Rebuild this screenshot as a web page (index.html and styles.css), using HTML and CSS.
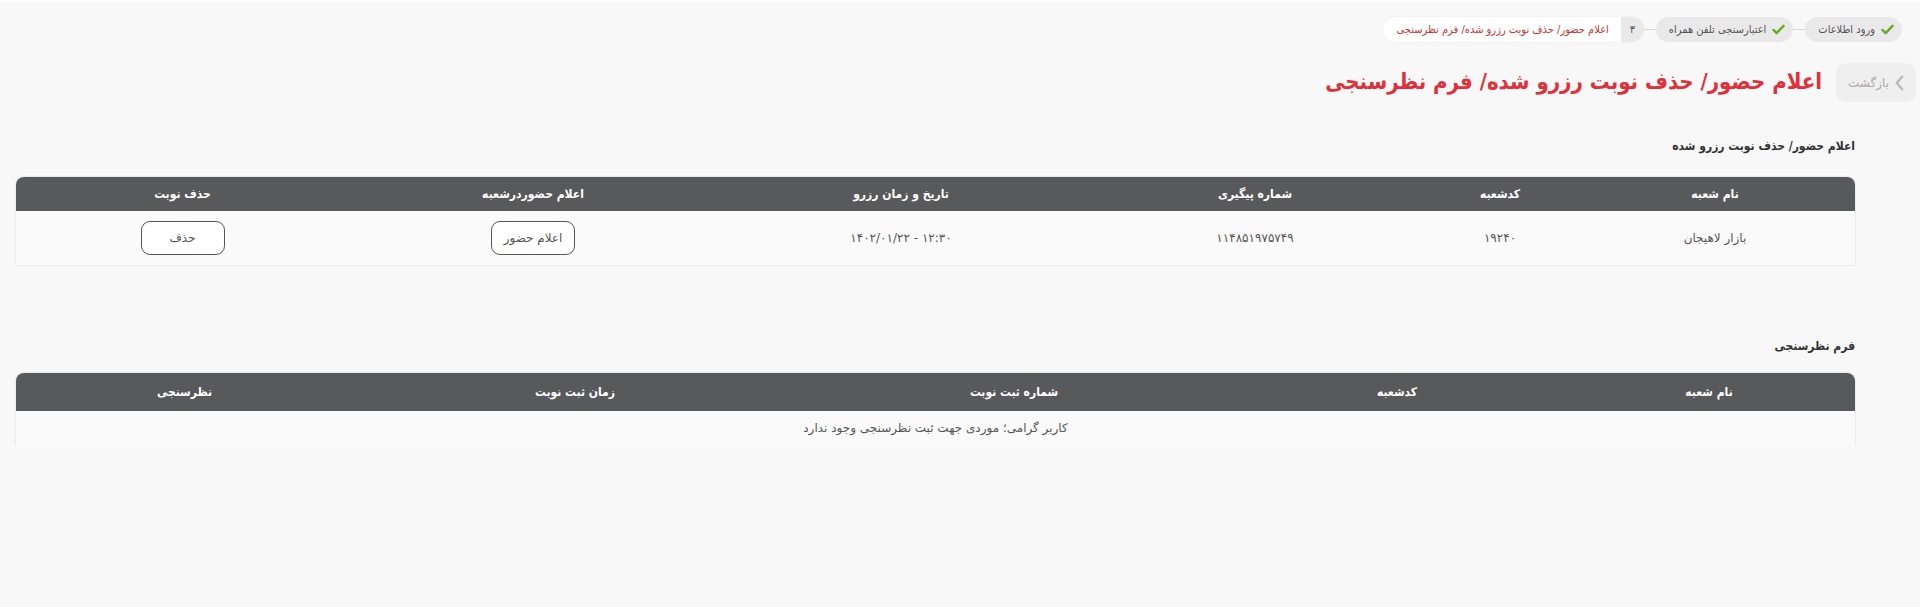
FILE: index.html
```html
<!DOCTYPE html>
<html lang="fa" dir="rtl">
<head>
  <meta charset="UTF-8">
  <meta name="viewport" content="width=device-width, initial-scale=1.0">
  <title>اعلام حضور/ حذف نوبت رزرو شده/ فرم نظرسنجی</title>
  <link rel="stylesheet" href="styles.css">
</head>
<body>
  <div class="page">
    <!-- مراحل -->
    <div class="steps">
      <div class="step done">
        <svg class="check" viewBox="0 0 14 12" width="13" height="11"><path d="M1.5 6.5 L5 10 L12.5 2" fill="none" stroke="#6aab24" stroke-width="2.6" stroke-linecap="round" stroke-linejoin="round"/></svg>
        <span>ورود اطلاعات</span>
      </div>
      <span class="link"></span>
      <div class="step done">
        <svg class="check" viewBox="0 0 14 12" width="13" height="11"><path d="M1.5 6.5 L5 10 L12.5 2" fill="none" stroke="#6aab24" stroke-width="2.6" stroke-linecap="round" stroke-linejoin="round"/></svg>
        <span>اعتبارسنجی تلفن همراه</span>
      </div>
      <span class="link"></span>
      <div class="step current">
        <span class="num">۳</span>
        <span class="label">اعلام حضور/ حذف نوبت رزرو شده/ فرم نظرسنجی</span>
      </div>
    </div>

    <!-- عنوان صفحه -->
    <div class="title-row">
      <button class="back">
        <svg viewBox="0 0 10 18" width="10" height="18"><path d="M8 2 L2 9 L8 16" fill="none" stroke="#b9b9b9" stroke-width="2.6" stroke-linecap="round" stroke-linejoin="round"/></svg>
        <span>بازگشت</span>
      </button>
      <h1>اعلام حضور/ حذف نوبت رزرو شده/ فرم نظرسنجی</h1>
    </div>

    <div class="content">
      <h3 class="section-title">اعلام حضور/ حذف نوبت رزرو شده</h3>
      <table class="grid reserve">
        <thead>
          <tr>
            <th class="c1">نام شعبه</th>
            <th class="c2">کدشعبه</th>
            <th class="c3">شماره پیگیری</th>
            <th class="c4">تاریخ و زمان رزرو</th>
            <th class="c5">اعلام حضوردرشعبه</th>
            <th>حذف نوبت</th>
          </tr>
        </thead>
        <tbody>
          <tr>
            <td>بازار لاهیجان</td>
            <td>۱۹۲۴۰</td>
            <td>۱۱۴۸۵۱۹۷۵۷۴۹</td>
            <td><span dir="ltr">۱۴۰۲/۰۱/۲۲ - ۱۲:۳۰</span></td>
            <td><button class="outline">اعلام حضور</button></td>
            <td><button class="outline">حذف</button></td>
          </tr>
        </tbody>
      </table>

      <h3 class="section-title survey-title">فرم نظرسنجی</h3>
      <table class="grid survey">
        <thead>
          <tr>
            <th class="c1">نام شعبه</th>
            <th class="c2">کدشعبه</th>
            <th class="c3">شماره ثبت نوبت</th>
            <th class="c4">زمان ثبت نوبت</th>
            <th>نظرسنجی</th>
          </tr>
        </thead>
        <tbody>
          <tr>
            <td colspan="5" class="empty">کاربر گرامی؛ موردی جهت ثبت نظرسنجی وجود ندارد</td>
          </tr>
        </tbody>
      </table>
    </div>
  </div>
</body>
</html>
```

FILE: styles.css
```css
body {
  margin: 0;
  background-color: #f8f8f8;
  font-family: "DejaVu Sans", "Noto Sans", sans-serif;
  color: #444;
  border-top: 2px solid #fff;
}

.page {
  padding-top: 15px;
}

/* مراحل */
.steps {
  display: flex;
  align-items: center;
  padding-right: 18px;
}

.step {
  display: flex;
  align-items: center;
  height: 25px;
  border-radius: 13px;
  background-color: #e9e9e9;
  font-family: "DejaVu Sans Condensed", "DejaVu Sans", sans-serif;
  font-size: 11px;
  color: #555;
}

.step.done {
  padding: 0 8px 0 13px;
  gap: 6px;
}

.link {
  width: 12px;
  height: 1px;
  background-color: #d8d8d8;
}

.step.current {
  background-color: #fff;
  box-shadow: 0 0 2px rgba(0, 0, 0, 0.08);
  overflow: hidden;
}

.step.current .num {
  display: flex;
  align-items: center;
  justify-content: center;
  width: 23px;
  height: 100%;
  background-color: #e9e9e9;
  color: #555;
}

.step.current .label {
  padding: 0 12px 0 14px;
  color: #c6343b;
}

/* عنوان */
.title-row {
  display: flex;
  align-items: center;
  gap: 14px;
  margin-top: 21px;
  padding-right: 4px;
}

.back {
  display: flex;
  align-items: center;
  gap: 6px;
  height: 39px;
  width: 80px;
  padding: 0 12px;
  border: none;
  border-radius: 10px;
  background-color: #efefef;
  color: #aaa;
  font-family: inherit;
  font-size: 12px;
}

.title-row h1 {
  margin: 0 0 3px;
  color: #e0313b;
  font-family: "DejaVu Sans Condensed", "DejaVu Sans", sans-serif;
  font-size: 22px;
  font-weight: bold;
}

/* جدول ها */
.content {
  padding: 0 65px 0 16px;
}

.section-title {
  margin: 37px 0 24px;
  font-family: "DejaVu Sans Condensed", "DejaVu Sans", sans-serif;
  font-size: 12px;
  font-weight: bold;
  color: #333;
}

.survey-title {
  margin-top: 74px;
  margin-bottom: 20px;
}

.grid {
  width: 100%;
  border-collapse: separate;
  border-spacing: 0;
  table-layout: fixed;
  background-color: #fafafa;
  border-radius: 8px 8px 0 0;
  box-shadow: 0 0 2px rgba(0, 0, 0, 0.18);
}

.grid th {
  height: 34px;
  padding: 0;
  background-color: #58595b;
  color: #fff;
  font-family: "DejaVu Sans Condensed", "DejaVu Sans", sans-serif;
  font-size: 12px;
  font-weight: bold;
}

.survey th {
  height: 38px;
}

.grid th:first-child {
  border-top-right-radius: 8px;
}

.grid th:last-child {
  border-top-left-radius: 8px;
}

.grid td {
  padding: 10px 0;
  text-align: center;
  font-size: 12px;
  color: #555;
}

.reserve .c1 { width: 280px; }
.reserve .c2 { width: 150px; }
.reserve .c3 { width: 340px; }
.reserve .c4 { width: 368px; }
.reserve .c5 { width: 368px; }

.survey .c1 { width: 292px; }
.survey .c2 { width: 332px; }
.survey .c3 { width: 434px; }
.survey .c4 { width: 444px; }

.grid td.empty {
  padding: 9px 0 10px;
  height: 16px;
}

button.outline {
  width: 84px;
  height: 34px;
  border: 1px solid #555;
  border-radius: 9px;
  background-color: #fff;
  color: #555;
  font-family: inherit;
  font-size: 12px;
  cursor: pointer;
}
```
